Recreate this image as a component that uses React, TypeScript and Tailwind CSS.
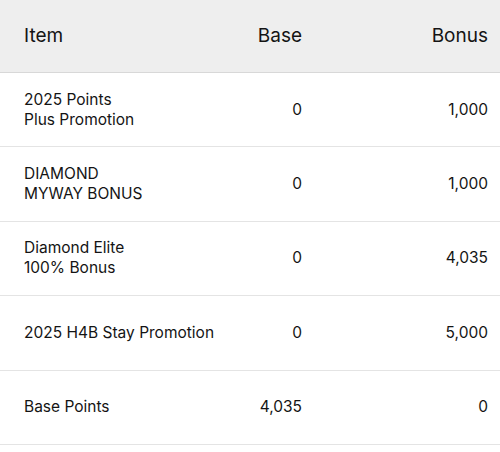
import React from 'react';

type Row = { item: string[]; base: string; bonus: string };

const rows: Row[] = [
    { item: ['2025 Points', 'Plus Promotion'], base: '0', bonus: '1,000' },
    { item: ['DIAMOND', 'MYWAY BONUS'], base: '0', bonus: '1,000' },
    { item: ['Diamond Elite', '100% Bonus'], base: '0', bonus: '4,035' },
    { item: ['2025 H4B Stay Promotion'], base: '0', bonus: '5,000' },
    { item: ['Base Points'], base: '4,035', bonus: '0' },
];

export default function App() {
    return (
        <div
            className="w-[500px] h-[452px] bg-white text-[#141414] overflow-hidden"
            style={{ fontFamily: 'Inter, "Liberation Sans", sans-serif' }}
        >
            {/* header */}
            <div className="flex items-center h-[73px] bg-[#eeeeee] border-b border-[#d8d8d8] pl-6 pr-3 text-[19px]">
                <div className="flex-1">Item</div>
                <div className="w-[120px] text-right">Base</div>
                <div className="w-[186px] text-right">Bonus</div>
            </div>

            {rows.map((row, i) => (
                <div
                    key={i}
                    className="flex items-center h-[74.4px] border-b border-[#e4e4e4] pl-6 pr-3 text-[15.5px] leading-5"
                >
                    <div className="flex-1 min-w-0 whitespace-nowrap">
                        {row.item.map((line, j) => (
                            <div key={j}>{line}</div>
                        ))}
                    </div>
                    <div className="w-[120px] text-right">{row.base}</div>
                    <div className="w-[186px] text-right">{row.bonus}</div>
                </div>
            ))}
        </div>
    );
}
